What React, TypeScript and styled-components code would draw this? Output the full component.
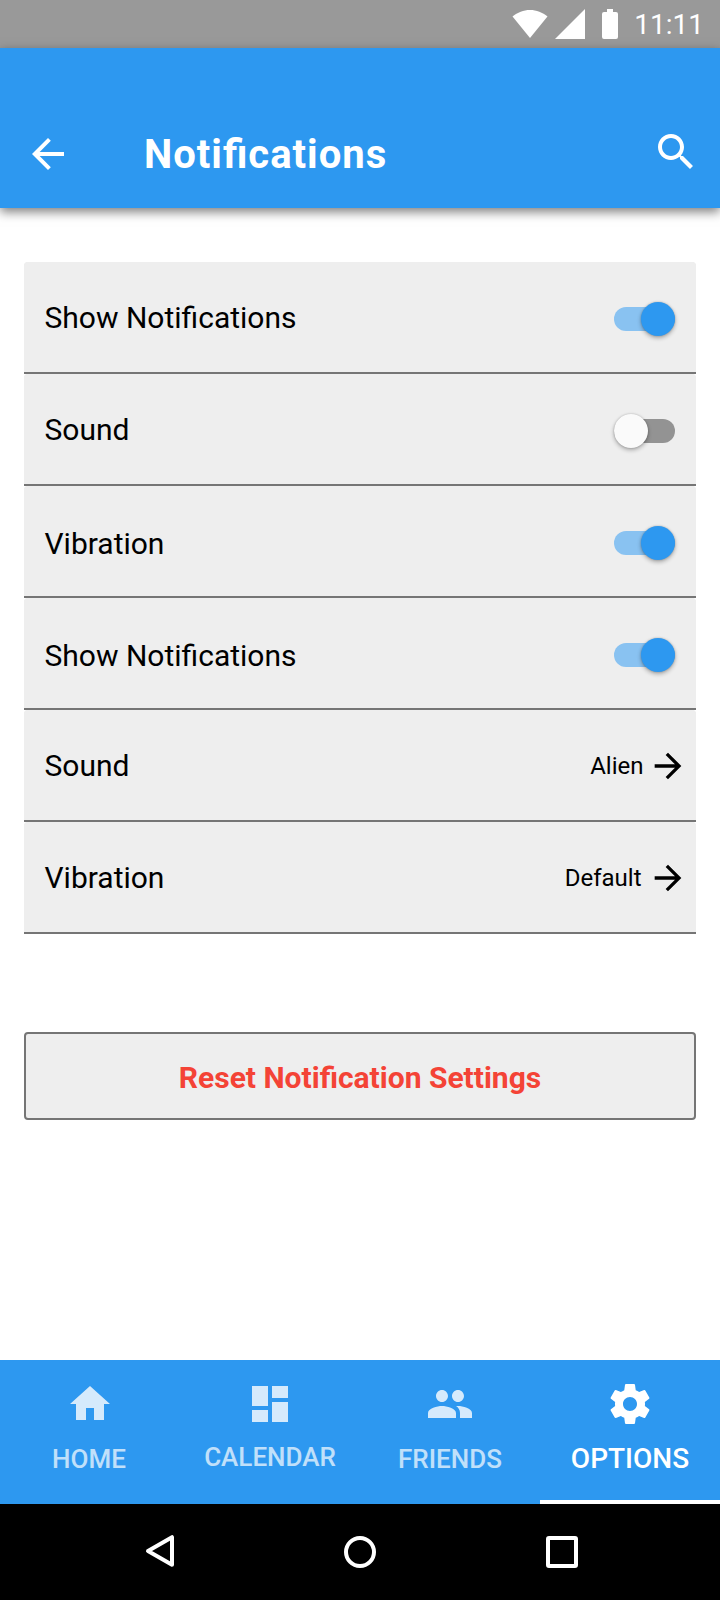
import React, { useState } from "react";
import styled, { createGlobalStyle, css } from "styled-components";

const blue = "#2d98f0";

const GlobalStyle = createGlobalStyle`
  *, *::before, *::after { box-sizing: border-box; }
  body { margin: 0; background: #fff; }
  button { font: inherit; color: inherit; background: none; border: 0; padding: 0; }
`;

const Screen = styled.div`
  display: flex;
  flex-direction: column;
  width: 720px;
  height: 1600px;
  overflow: hidden;
  background: #fff;
  font-family: Roboto, "Liberation Sans", sans-serif;
  color: #000;
`;

const StatusBar = styled.div`
  flex: none;
  display: flex;
  justify-content: flex-end;
  height: 48px;
  padding-right: 16px;
  background: #999;
  color: #fff;
`;

const StatusIcons = styled.svg`
  display: block;
  width: 110px;
  height: 48px;
  margin-right: 12px;
  fill: currentColor;
`;

const Clock = styled.span`
  padding-top: 1px;
  font-size: 28px;
  font-weight: 400;
  line-height: 48px;
`;

const AppBar = styled.header`
  position: relative;
  flex: none;
  display: flex;
  align-items: flex-end;
  height: 160px;
  padding: 0 20px 30px 24px;
  background: ${blue};
  color: #fff;
  box-shadow: 0 4px 10px rgba(0, 0, 0, 0.5);
`;

const Title = styled.h1`
  flex: 1;
  margin: 0 0 -1px 72px;
  font-size: 40px;
  font-weight: 700;
  line-height: 48px;
  letter-spacing: 1px;
  font-feature-settings: "liga" 1;
`;

const IconButton = styled.button<{ $raised?: boolean }>`
  display: flex;
  margin-bottom: ${(p) => (p.$raised ? 2 : 0)}px;
`;

const Glyph = styled.svg<{ $size?: number }>`
  display: block;
  flex: none;
  width: ${(p) => p.$size ?? 48}px;
  height: ${(p) => p.$size ?? 48}px;
  fill: currentColor;
`;

const Content = styled.main`
  flex: 1;
  display: flex;
  flex-direction: column;
  gap: 98px;
  padding: 54px 24px 0;
`;

const SettingsList = styled.ul`
  margin: 0;
  padding: 0;
  list-style: none;
`;

const Row = styled.li<{ $link?: boolean }>`
  display: flex;
  align-items: center;
  justify-content: space-between;
  height: 112px;
  padding: 2px ${(p) => (p.$link ? 8 : 21)}px 0 20.5px;
  border-bottom: 2px solid #757575;
  background: #eee;
  clip-path: polygon(0 2px, 2px 0, calc(100% - 2px) 0, 100% 2px, 100% 100%, 0 100%);
`;

const RowLabel = styled.span<{ $drop: number }>`
  padding-top: ${(p) => p.$drop}px;
  font-size: 30px;
  line-height: 36px;
`;

const Track = styled.button<{ $on: boolean }>`
  display: flex;
  align-items: center;
  justify-content: ${(p) => (p.$on ? "flex-end" : "flex-start")};
  width: 61px;
  height: 24px;
  margin-top: 2px;
  border-radius: 12px;
  background: ${(p) => (p.$on ? "#89c2f1" : "#939393")};
`;

const Thumb = styled.span<{ $on: boolean }>`
  flex: none;
  width: 34px;
  height: 34px;
  border-radius: 50%;
  background: ${(p) => (p.$on ? blue : "#fafafa")};
  box-shadow: 0 2px 4px rgba(0, 0, 0, 0.3), 0 0 2px rgba(0, 0, 0, 0.2);
`;

const RowValue = styled.span<{ $gap: number }>`
  display: flex;
  align-items: center;
  gap: ${(p) => p.$gap}px;
  font-size: 24px;
  line-height: 28px;
`;

const ResetButton = styled.button`
  height: 88px;
  padding-top: 2px;
  border: 2px solid #757575;
  border-radius: 4px;
  background: #eee;
  color: #f44336;
  font-size: 30px;
  font-weight: 700;
`;

const TabBar = styled.nav`
  flex: none;
  display: grid;
  grid-template-columns: repeat(4, 1fr);
  height: 144px;
  background: ${blue};
  color: #fff;
`;

const TabLabel = styled.span<{ $active?: boolean; $top: number; $nudge?: number }>`
  margin-top: ${(p) => p.$top}px;
  padding-right: ${(p) => p.$nudge ?? 0}px;
  font-size: ${(p) => (p.$active ? 28 : 26)}px;
  font-weight: 500;
  line-height: 32px;
`;

const Tab = styled.button<{ $active?: boolean }>`
  display: flex;
  flex-direction: column;
  align-items: center;
  padding-top: 20px;
  ${(p) =>
    p.$active
      ? css`
          border-bottom: 4px solid #fff;
        `
      : css`
          ${Glyph} { opacity: 0.8; }
          ${TabLabel} { opacity: 0.7; }
        `}
`;

const SystemBar = styled.footer`
  flex: none;
  display: flex;
  justify-content: center;
  align-items: center;
  gap: 154px;
  height: 96px;
  background: #000;
`;

const SystemGlyph = styled.svg`
  display: block;
  width: 48px;
  height: 48px;
  fill: none;
  stroke: #fff;
  stroke-width: 4;
  stroke-linejoin: round;
`;

const paths = {
  back: "M20 11H7.83l5.59-5.59L12 4l-8 8 8 8 1.41-1.41L7.83 13H20v-2z",
  forward: "M12 4l-1.41 1.41L16.17 11H4v2h12.17l-5.58 5.59L12 20l8-8z",
  search:
    "M15.5 14h-.79l-.28-.27C15.41 12.59 16 11.11 16 9.5 16 5.91 13.09 3 9.5 3S3 5.91 3 9.5 5.91 16 9.5 16c1.61 0 3.09-.59 4.23-1.57l.27.28v.79l5 4.99L20.49 19l-4.99-5zm-6 0C7.01 14 5 11.99 5 9.5S7.01 5 9.5 5 14 7.01 14 9.5 11.99 14 9.5 14z",
  home: "M10 20v-6h4v6h5v-8h3L12 3 2 12h3v8z",
  dashboard: "M3 13h8V3H3v10zm0 8h8v-6H3v6zm10 0h8V11h-8v10zm0-18v6h8V3h-8z",
  group:
    "M16 11c1.66 0 2.99-1.34 2.99-3S17.66 5 16 5c-1.66 0-3 1.34-3 3s1.34 3 3 3zm-8 0c1.66 0 2.99-1.34 2.99-3S9.66 5 8 5C6.34 5 5 6.34 5 8s1.34 3 3 3zm0 2c-2.33 0-7 1.17-7 3.5V19h14v-2.5c0-2.33-4.67-3.5-7-3.5zm8 0c-.29 0-.62.02-.97.05 1.16.84 1.97 1.97 1.97 3.45V19h6v-2.5c0-2.33-4.67-3.5-7-3.5z",
  settings:
    "M19.43 12.98c.04-.32.07-.64.07-.98s-.03-.66-.07-.98l2.11-1.65c.19-.15.24-.42.12-.64l-2-3.46c-.12-.22-.39-.3-.61-.22l-2.49 1c-.52-.4-1.08-.73-1.69-.98l-.38-2.65C14.46 2.18 14.25 2 14 2h-4c-.25 0-.46.18-.49.42l-.38 2.65c-.61.25-1.17.59-1.69.98l-2.49-1c-.23-.09-.49 0-.61.22l-2 3.46c-.13.22-.07.49.12.64l2.11 1.65c-.04.32-.07.65-.07.98s.03.66.07.98l-2.11 1.65c-.19.15-.24.42-.12.64l2 3.46c.12.22.39.3.61.22l2.49-1c.52.4 1.08.73 1.69.98l.38 2.65c.03.24.24.42.49.42h4c.25 0 .46-.18.49-.42l.38-2.65c.61-.25 1.17-.59 1.69-.98l2.49 1c.23.09.49 0 .61-.22l2-3.46c.12-.22.07-.49-.12-.64l-2.11-1.65zM12 15.5c-1.93 0-3.5-1.57-3.5-3.5s1.57-3.5 3.5-3.5 3.5 1.57 3.5 3.5-1.57 3.5-3.5 3.5z",
};

const Icon = ({ name, size }: { name: keyof typeof paths; size?: number }) => (
  <Glyph viewBox="0 0 24 24" $size={size} aria-hidden="true">
    <path d={paths[name]} />
  </Glyph>
);

type Setting = { label: string; drop: number; value?: string; gap?: number; on?: boolean };

const settings: Setting[] = [
  { label: "Show Notifications", drop: 0, on: true },
  { label: "Sound", drop: 0, on: false },
  { label: "Vibration", drop: 4, on: true },
  { label: "Show Notifications", drop: 4, on: true },
  { label: "Sound", drop: 0, value: "Alien", gap: 4.5 },
  { label: "Vibration", drop: 0, value: "Default", gap: 6.5 },
];

const Toggle = ({ label, initial }: { label: string; initial: boolean }) => {
  const [on, setOn] = useState(initial);
  return (
    <Track $on={on} role="switch" aria-checked={on} aria-label={label} onClick={() => setOn(!on)}>
      <Thumb $on={on} />
    </Track>
  );
};

type TabItem = {
  label: string;
  icon: keyof typeof paths;
  top: number;
  nudge?: number;
  active?: boolean;
};

const tabs: TabItem[] = [
  { label: "HOME", icon: "home", top: 15, nudge: 2 },
  { label: "CALENDAR", icon: "dashboard", top: 13 },
  { label: "FRIENDS", icon: "group", top: 15 },
  { label: "OPTIONS", icon: "settings", top: 15, active: true },
];

export default function App() {
  return (
    <Screen>
      <GlobalStyle />
      <StatusBar>
        <StatusIcons viewBox="0 0 110 48" aria-hidden="true">
          <path d="M.5 16.5C5.5 12.5 11.5 10 18 10s12.500 2.500 17.500 6.500L18 38z" />
          <path d="M43 39h30V9z" />
          <path d="M95 9h6v3h3q2 0 2 2v23q0 2-2 2H92q-2 0-2-2V14q0-2 2-2h3z" />
        </StatusIcons>
        <Clock>11:11</Clock>
      </StatusBar>
      <AppBar>
        <IconButton aria-label="Back">
          <Icon name="back" />
        </IconButton>
        <Title>Notifications</Title>
        <IconButton $raised aria-label="Search">
          <Icon name="search" />
        </IconButton>
      </AppBar>
      <Content>
        <SettingsList>
          {settings.map((s, i) => (
            <Row key={i} $link={s.value !== undefined}>
              <RowLabel $drop={s.drop}>{s.label}</RowLabel>
              {s.value !== undefined ? (
                <RowValue $gap={s.gap ?? 4}>
                  {s.value}
                  <Icon name="forward" size={40} />
                </RowValue>
              ) : (
                <Toggle label={s.label} initial={!!s.on} />
              )}
            </Row>
          ))}
        </SettingsList>
        <ResetButton>Reset Notification Settings</ResetButton>
      </Content>
      <TabBar>
        {tabs.map((t) => (
          <Tab key={t.label} $active={t.active}>
            <Icon name={t.icon} />
            <TabLabel $active={t.active} $top={t.top} $nudge={t.nudge}>
              {t.label}
            </TabLabel>
          </Tab>
        ))}
      </TabBar>
      <SystemBar>
        <SystemGlyph viewBox="0 0 48 48" aria-hidden="true">
          <path d="M14 23L38 9.2V36.8z" />
        </SystemGlyph>
        <SystemGlyph viewBox="0 0 48 48" aria-hidden="true">
          <circle cx="24" cy="24" r="14" />
        </SystemGlyph>
        <SystemGlyph viewBox="0 0 48 48" aria-hidden="true">
          <rect x="10" y="10" width="28" height="28" rx="1" />
        </SystemGlyph>
      </SystemBar>
    </Screen>
  );
}
